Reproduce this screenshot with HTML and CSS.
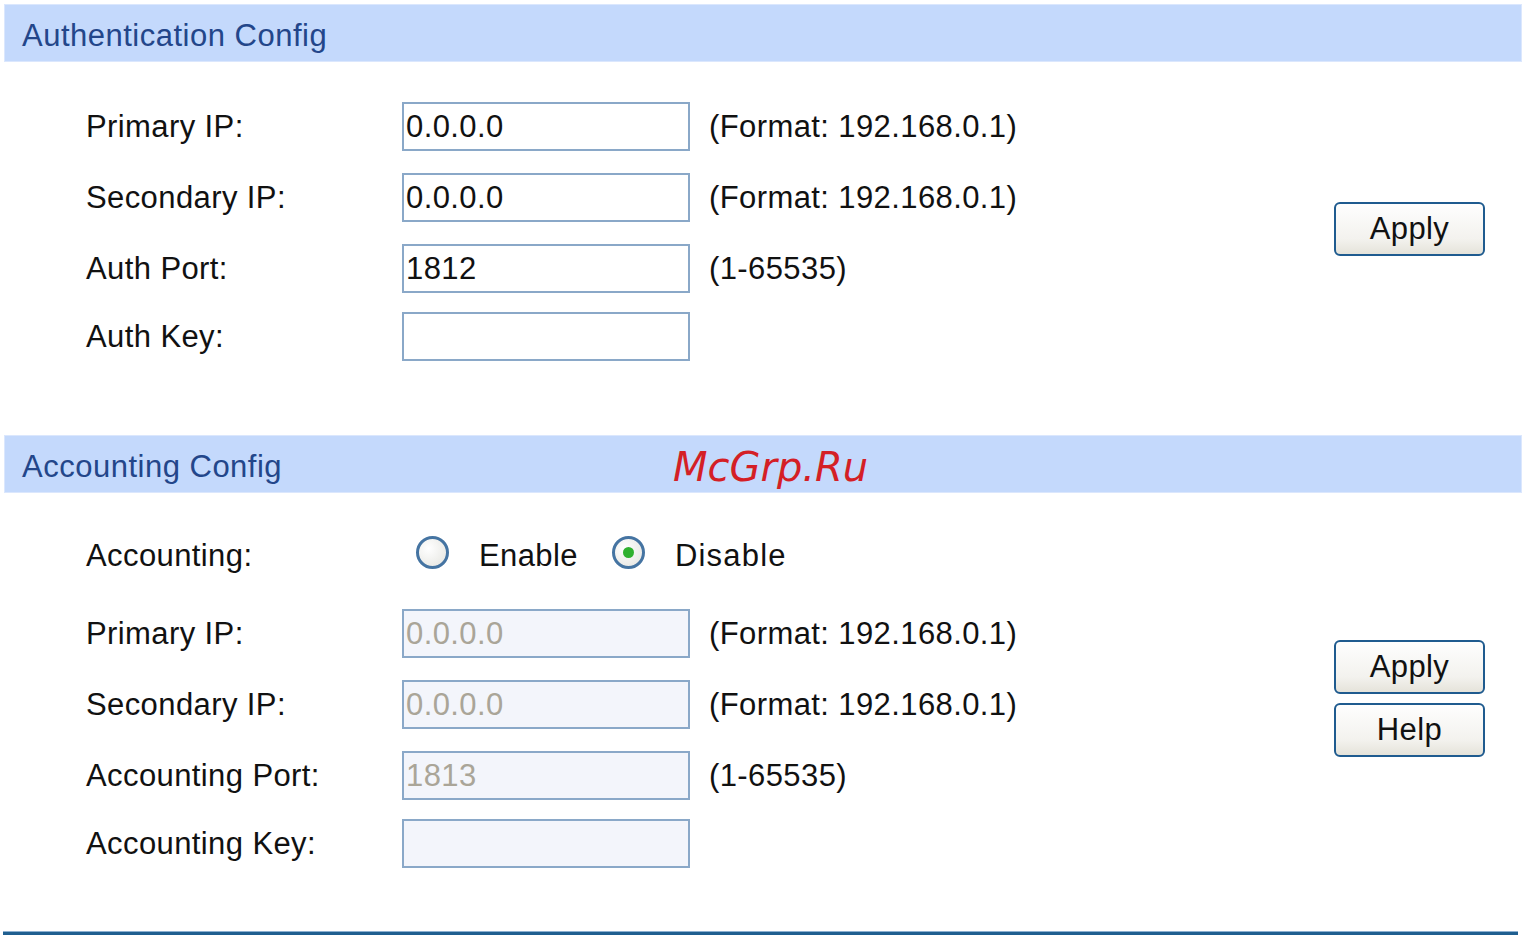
FILE: index.html
```html
<html>
<head>
<title>RADIUS Config</title>
<link rel="stylesheet" href="styles.css">
</head>
<body>
<div id="Page">

<div class="head">Authentication Config</div>
<div class="panel">
  <div class="form">
    <div class="row"><span class="label">Primary IP:</span><input class="field" type="text" value="0.0.0.0"><span class="hint">(Format: 192.168.0.1)</span></div>
    <div class="row"><span class="label">Secondary IP:</span><input class="field" type="text" value="0.0.0.0"><span class="hint">(Format: 192.168.0.1)</span></div>
    <div class="row"><span class="label">Auth Port:</span><input class="field" type="text" value="1812"><span class="hint">(1-65535)</span></div>
    <div class="row last"><span class="label">Auth Key:</span><input class="field" type="password" value=""></div>
  </div>
  <div class="actions">
    <button class="btn">Apply</button>
  </div>
</div>

<div class="head">Accounting Config<span class="mark">McGrp.Ru</span></div>
<div class="panel">
  <div class="form">
    <div class="row radios">
      <span class="label">Accounting:</span>
      <label class="opt"><input class="radio" type="radio" name="acct">Enable</label>
      <label class="opt"><input class="radio" type="radio" name="acct" checked>Disable</label>
    </div>
    <div class="row"><span class="label">Primary IP:</span><input class="field" type="text" value="0.0.0.0" disabled><span class="hint">(Format: 192.168.0.1)</span></div>
    <div class="row"><span class="label">Secondary IP:</span><input class="field" type="text" value="0.0.0.0" disabled><span class="hint">(Format: 192.168.0.1)</span></div>
    <div class="row"><span class="label">Accounting Port:</span><input class="field" type="text" value="1813" disabled><span class="hint">(1-65535)</span></div>
    <div class="row last"><span class="label">Accounting Key:</span><input class="field" type="password" value="" disabled></div>
  </div>
  <div class="actions">
    <button class="btn">Apply</button>
    <button class="btn">Help</button>
  </div>
</div>

<div class="footline"></div>
</div>
</body>
</html>
```

FILE: styles.css
```css
body { margin:0; background:#fff; color:#111; font-family:"Liberation Sans", Arial, sans-serif; font-size:31px; letter-spacing:0.4px; }
#Page { padding-top:4px; }

.head { position:relative; margin:0 9px 0 4px; height:58px; line-height:58px; padding:2px 0 0 17px; background:#c4d9fc; border:1px solid #dbe7fd; box-sizing:border-box; color:#23468a; letter-spacing:0.5px; }
.mark { position:absolute; left:668px; top:2px; font-family:"DejaVu Sans", sans-serif; font-style:oblique; font-size:40px; color:#d41f26; line-height:58px; letter-spacing:0; }

.panel { display:flex; }
.form { display:flex; flex-direction:column; gap:22px; padding:40px 0 74px 86px; }
.row { display:flex; align-items:center; height:49px; }
.row.last { margin-top:-3px; }
.row.radios { margin-top:-2px; margin-bottom:7px; }
.label { width:316px; }
.hint { padding-left:19px; }

.field { width:288px; height:49px; box-sizing:border-box; border:2px solid #8aa8c8; padding:0 2px; margin:0; font-family:"Liberation Sans", Arial, sans-serif; font-size:31px; letter-spacing:0.4px; color:#111; background:#fff; outline:none; }
.field:disabled { background:#f3f5fb; color:#aaa598; }

.opt { display:flex; align-items:center; margin-left:14px; margin-right:34px; }
.opt + .opt { margin-left:0; letter-spacing:1.2px; }
.radio { appearance:none; -webkit-appearance:none; width:33px; height:33px; margin:-6px 30px 0 0; border-radius:50%; border:3px solid #4574a2; background:radial-gradient(circle at 35% 35%, #ffffff, #e3e3de); box-sizing:border-box; position:relative; }
.radio:checked::after { content:""; position:absolute; left:8px; top:8px; width:11px; height:11px; border-radius:50%; background:#2fb12f; }

.actions { margin-left:auto; margin-right:46px; display:flex; flex-direction:column; justify-content:center; gap:9px; padding:40px 0 79px; }
.btn { width:151px; height:54px; border:2px solid #1f5b8f; border-radius:6px; background:linear-gradient(#fefefe, #f3f2ee 70%, #e5e3da); font-family:"Liberation Sans", Arial, sans-serif; font-size:31px; letter-spacing:0.4px; color:#111; padding:0; }

.footline { margin:-11px 13px 0 3px; height:4px; border-top:1px solid #8db0d0; background:#1f5f90; }
```
